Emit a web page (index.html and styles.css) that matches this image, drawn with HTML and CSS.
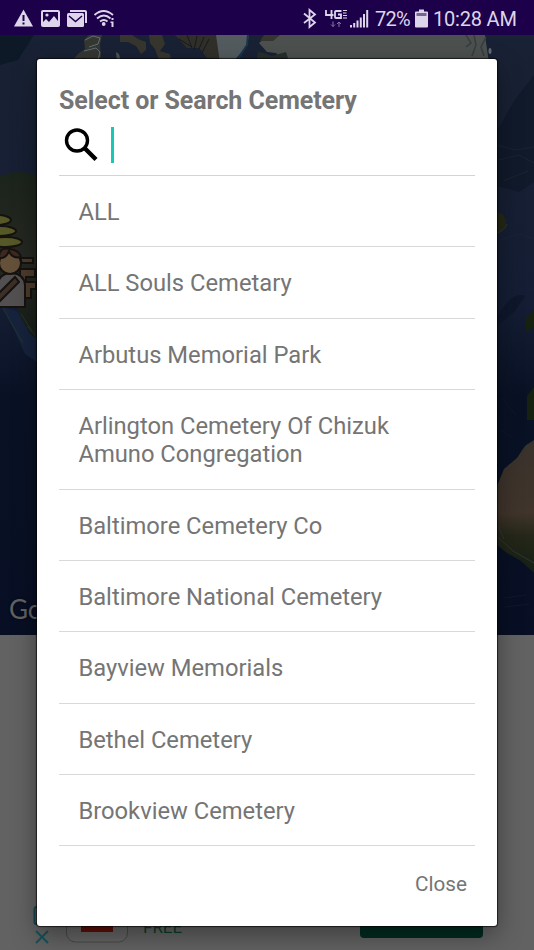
FILE: index.html
```html
<!DOCTYPE html>
<html lang="en">
<head>
<meta charset="utf-8">
<title>Select or Search Cemetery</title>
<link rel="stylesheet" href="styles.css">
</head>
<body>
<div class="screen">
  <header class="status">
    <svg class="status-left" width="120" height="35" viewBox="0 0 120 35" fill="#ddd5ea">
      <path d="M23.5 9.5 33 26.500H14Z"/>
      <path d="M22.500 15h2v6h-2zm0 7.500h2v2h-2z" fill="#1c004a"/>
      <rect x="41" y="10" width="19" height="17" rx="2"/>
      <path d="M43 12h15v9l-4-5-5 6-3-3-3 3z" fill="#1c004a"/><circle cx="47" cy="15" r="1.600"/>
      <path d="M70 10h15q2 0 2 2v11h-2V12H70z"/>
      <rect x="67" y="13" width="17" height="14" rx="1.500"/>
      <path d="m69 16 6.500 5.500L82 16" fill="none" stroke="#1c004a" stroke-width="1.500"/>
      <g fill="none" stroke="#ddd5ea" stroke-width="1.900"><path d="M94.500 15q9-8 18.500 0M97 18.500q7-6 13.500 0M100 21.500q4-3 7.500 0"/></g>
      <circle cx="103.700" cy="24" r="1.900"/><path d="M111.500 18h2v2h-2zm-1 3.500h3V27h-2v-4h-1z"/>
    </svg>
    <svg class="status-radio" width="70" height="35" viewBox="302 0 70 35" fill="#ddd5ea">
      <path d="m304 13.500 11 9-5.500 4.500V10l5.500 4.500-11 8.500" fill="none" stroke="#ddd5ea" stroke-width="1.800"/>
      <g fill="none" stroke="#ddd5ea" stroke-width="1.800"><path d="M326 10v5h7.500M331.500 10v9M341.500 11H336q-1 0-1 1v5q0 1 1 1h5v-3.500h-3"/></g>
      <path d="M343 10.500h4M343 13h3.500M343 15.500h4M343 18h4" fill="none" stroke="#ddd5ea"/>
      <path d="M333 21.500v5m-2-2 2 2 2-2M339 27v-5m-2 2 2-2 2 2" fill="none" stroke="#8878a3"/>
      <path d="M350 25h2v2.500h-2zM353.200 23h2v4.500h-2zM356.500 20.500h2v7h-2zM359.800 17.500h2v10h-2zM363 14h2v13.500h-2zM366.200 10h2v17.500h-2z"/>
    </svg>
    <span class="battery-text">72%</span>
    <svg class="battery" width="13" height="35" viewBox="0 0 13 35"><path d="M4 9.500h5v2h3q1 0 1 1v14q0 1-1 1H1q-1 0-1-1v-14q0-1 1-1h3z" fill="#ddd5ea"/><path d="M1.500 13h10v3h-10z" fill="#75658f"/></svg>
    <span class="clock">10:28 AM</span>
  </header>
  <div class="map">
    <svg width="534" height="600" viewBox="0 35 534 600">
      <defs>
        <linearGradient id="sea" x1="0" y1="0" x2="0" y2="1"><stop offset="0" stop-color="#192234"/><stop offset=".45" stop-color="#141d33"/><stop offset=".6" stop-color="#091225"/><stop offset="1" stop-color="#080f24"/></linearGradient>
        <linearGradient id="desert" x1="0" y1="0" x2="0" y2="1"><stop offset="0" stop-color="#39322b"/><stop offset=".55" stop-color="#40342b"/><stop offset=".72" stop-color="#252719"/><stop offset="1" stop-color="#141f13"/></linearGradient>
        <linearGradient id="coast" x1="0" y1="0" x2="0" y2="1"><stop offset="0" stop-color="#1b241b"/><stop offset=".5" stop-color="#262822"/><stop offset="1" stop-color="#151d16"/></linearGradient>
      </defs>
      <path d="M0 35h534v600H0z" fill="url(#sea)"/>
      <path d="M0 35h34L18 60 0 65z" fill="#0e1928"/>
      <path d="M534 75 514 101l-17 30v55l22 6 15-10z" fill="#111a2b"/>
      <path d="m497 145 18 5 19-3M499 160l20-5 15 8M503 181l25-10M500 240l20-6 14 5" fill="none" stroke="#1a2437"/>
      <path d="m84 40 5-5h13l-2 10 1 12-10 6-7-5-14 5 9-10 6-4z" fill="#353733"/>
      <path d="m85 40 8-4 7 2-2 6-9 3m-5 4 12-3 4 4-2 8" fill="none" stroke="#646c70"/>
      <path d="m120 35 12 0 6 4 8 3 0 8-5 4-5-8-8-4-8 0zm29 0h13l3 9-5 7 10 3 1 7-12-1-4-11-5-6z" fill="#36362e"/>
      <path d="m175 35 45 0 2 25-15-2-8-10-12 0z" fill="#302f29"/>
      <path d="m179 39 13 8m-5-12 5 13m5-12-3 14m10-13-5 12m10-10-7 14" stroke="#151b20" fill="none"/>
      <path d="m116 52 3 2 2 8h-4z" fill="#4d5554"/>
      <path d="M216 35h33l-2 10-7 9-8 9h-12z" fill="#535b5e"/>
      <path d="m248 35-1 10-11 17" fill="none" stroke="#17364f" stroke-width="2"/>
      <path d="M259 43q8-7 17-8h209l4 28H286l-10-10-9-1z" fill="#4c504f"/>
      <path d="m260 41 4-6h16l-7 6z" fill="#35372e"/>
      <path d="m258 52 6 1 8 3 14-4 2 6-6 5h-26z" fill="#262f2c"/>
      <path d="m466 35 5 8-5 4m8-12 2 10-4 11m14-19-5 10 3 9" fill="none" stroke="#363d3e" stroke-width="1.500"/>
      <ellipse cx="490" cy="51" rx="1.500" ry="3" fill="#606b70"/>
      <path d="M0 176q22-8 37 0v170l-12-12-7-25L0 292z" fill="url(#coast)"/>
      <path d="M3 307 17 311l13 23 7 5v23l-12-8-10-22z" fill="#16233c"/>
      <path d="m3 308 10 18 10 17m-2-29 11 17m-5-5 8 9" fill="none" stroke="#24332f"/>
      <path d="M497 212q10 2 9 13-4 8-9 6z" fill="#252715"/>
      <path d="M497 233q8-3 10-9" fill="none" stroke="#30372f"/>
      <path d="m534 310-9 9 1 13 8-5zm0 77-7 9v24h7z" fill="#16220f"/>
      <path d="M497 318q15-28 28-22l-10 15-18 15z" fill="#0e172b"/>
      <path d="m534 440-9 6-8 12-13 11-7 17v59l10 8 14 8 13 12z" fill="url(#desert)"/>
      <path d="m507 471 12-11 8-15 7-3m-30 97-6-13m0 11 15 14 21 12" fill="none" stroke="#303433"/>
      <path d="m499 347 12 10m-9 41 14 17m-15 15 12 8m-9 160 22-3m-21 12 24-3" fill="none" stroke="#0f192c"/>
      <g stroke="#15120f" stroke-width="2">
        <g fill="#575827"><ellipse cx="-3" cy="220" rx="14" ry="5"/><ellipse cx="0" cy="231" rx="16" ry="5"/><ellipse cx="6" cy="242" rx="16" ry="5"/></g>
        <path d="M20 258h13v5H22zM20 269h15v8h-9v5h10v7h-5v9H20z" fill="#4c3b2c"/>
        <path d="M-2 307v-25q3-9 14-9 12 1 13 12v22z" fill="#535052"/>
        <path d="m-1 302 20-20-4-5-18 18z" fill="#3d3027"/>
        <circle cx="10" cy="263" r="11" fill="#65503a"/>
        <path d="M-1 258q0-12 11-9 9 1 11 8-9 2-12-6-3 8-10 7z" fill="#3d291f"/>
      </g>
    </svg>
    <span class="map-logo">Google</span>
  </div>
  <div class="ad">
    <svg width="534" height="50" viewBox="0 900 534 50">
      <rect x="34.500" y="907" width="16" height="17" rx="2" fill="none" stroke="#12464e" stroke-width="2"/>
      <path d="m36 931 12 12m0-12-12 12" stroke="#17525a" stroke-width="2"/>
      <rect x="66.500" y="890" width="61" height="52" rx="9" fill="#646464" stroke="#484848"/>
      <path d="M81 918h32v14H81z" fill="#5d1007"/>
      <rect x="360" y="900" width="123" height="38" rx="4" fill="#002b20"/>
    </svg>
    <span class="ad-label">FREE</span>
  </div>
  <main class="dialog">
    <h1>Select or Search Cemetery</h1>
    <div class="search">
      <svg width="34" height="34" viewBox="0 0 34 34" fill="none" stroke="#000"><circle cx="13" cy="12.500" r="10.500" stroke-width="3.400"/><path d="m20.500 20 11.500 11.500" stroke-width="4.400"/></svg>
      <span class="caret"></span>
    </div>
    <ul>
      <li>ALL</li>
      <li>ALL Souls Cemetary</li>
      <li>Arbutus Memorial Park</li>
      <li>Arlington Cemetery Of Chizuk<br>Amuno Congregation</li>
      <li>Baltimore Cemetery Co</li>
      <li>Baltimore National Cemetery</li>
      <li>Bayview Memorials</li>
      <li>Bethel Cemetery</li>
      <li>Brookview Cemetery</li>
    </ul>
    <button class="close">Close</button>
  </main>
</div>
</body>
</html>
```
FILE: styles.css
```css
* { box-sizing: border-box; }
body { margin: 0; font-family: Roboto, sans-serif; }
.screen { position: relative; width: 534px; height: 950px; overflow: hidden; background: #626262; display: flex; flex-direction: column; }
.status { flex: none; height: 35px; background: #1c004a; color: #ddd5ea; display: flex; align-items: center; font-size: 20px; white-space: nowrap; }
.status-radio { margin-left: 182px; }
.battery-text { width: 38px; margin-left: 3px; padding-top: 3px; letter-spacing: -0.8px; }
.battery { margin-left: 2px; }
.clock { margin-left: 5px; padding-top: 3px; letter-spacing: -0.2px; }
.status svg, .map svg, .ad svg { display: block; flex: none; }
.map { flex: none; position: relative; height: 600px; }
.map-logo { position: absolute; left: 9px; top: 559px; font: 26px/30px Lato, sans-serif; color: #626262; text-shadow: 0 0 3px #050a15; }
.ad { position: relative; margin-top: auto; height: 50px; }
.ad-label { position: absolute; left: 143px; top: 17px; font-size: 17px; line-height: 20px; color: #0a3d2b; }
.dialog { position: absolute; left: 37px; top: 59px; width: 460px; height: 867px; padding: 25px 22px 0; border-radius: 3px; background: #fff; box-shadow: 0 0 1px 1px rgba(0,0,0,.65), 0 9px 26px rgba(0,0,0,.38); color: #757575; display: flex; flex-direction: column; }
h1 { margin: 0; font-size: 25px; line-height: 33px; font-weight: 700; letter-spacing: -0.07px; white-space: nowrap; }
.search { flex: none; height: 59px; display: flex; align-items: flex-start; padding: 10px 0 0 5px; border-bottom: 1px solid #d4d4d4; }
.search svg { margin-top: 1px; }
.caret { width: 3px; height: 36px; margin-left: 13px; background: #17c8b5; }
ul { margin: 0; padding: 0; list-style: none; }
li { padding: 22.15px 0 20px 19.4px; border-bottom: 1px solid #d9d9d9; font-size: 23.75px; line-height: 28.2px; white-space: nowrap; }
.close { align-self: flex-end; margin: 26px 8px 0 0; padding: 0; border: 0; background: none; color: #757575; font: 20.7px/25px Roboto, sans-serif; }
```
